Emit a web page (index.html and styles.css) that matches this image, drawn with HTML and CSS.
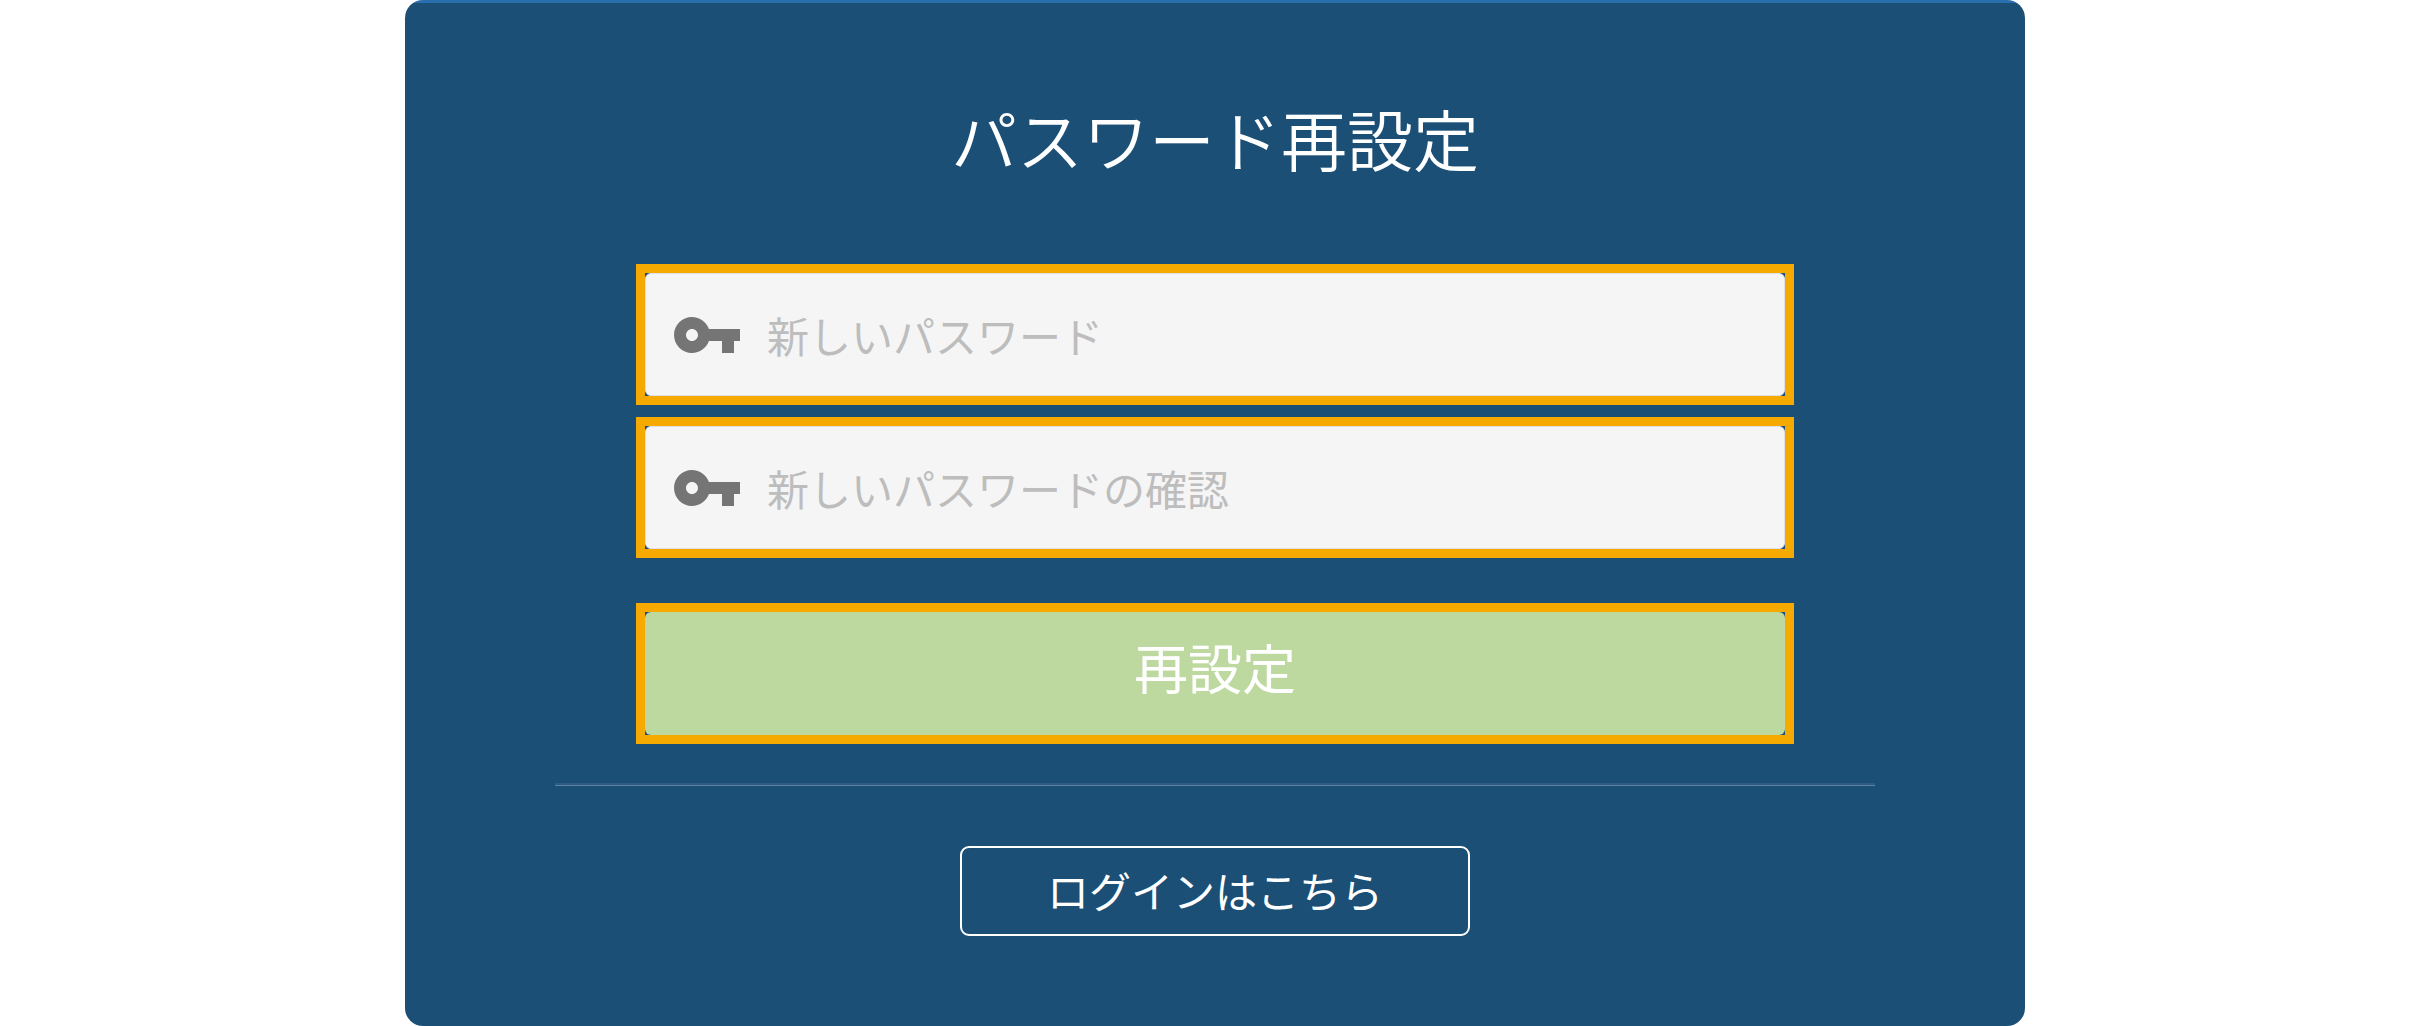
FILE: index.html
```html
<!DOCTYPE html>
<html lang="ja">
<head>
<meta charset="utf-8">
<meta name="viewport" content="width=device-width, initial-scale=1">
<title>パスワード再設定</title>
<link rel="stylesheet" href="styles.css">
</head>
<body>
<main class="card">
  <h1 class="title">パスワード再設定</h1>
  <form class="form">
    <div class="highlight">
      <label class="field">
        <svg class="icon" viewBox="0 0 24 24" aria-hidden="true"><path d="M12.65 10C11.83 7.67 9.61 6 7 6c-3.31 0-6 2.69-6 6s2.69 6 6 6c2.61 0 4.83-1.67 5.65-4H17v4h4v-4h2v-4H12.65zM7 14c-1.1 0-2-.9-2-2s.9-2 2-2 2 .9 2 2-.9 2-2 2z"/></svg>
        <input class="input" type="password" placeholder="新しいパスワード" aria-label="新しいパスワード" autocomplete="new-password">
      </label>
    </div>
    <div class="highlight">
      <label class="field">
        <svg class="icon" viewBox="0 0 24 24" aria-hidden="true"><path d="M12.65 10C11.83 7.67 9.61 6 7 6c-3.31 0-6 2.69-6 6s2.69 6 6 6c2.61 0 4.83-1.67 5.65-4H17v4h4v-4h2v-4H12.65zM7 14c-1.1 0-2-.9-2-2s.9-2 2-2 2 .9 2 2-.9 2-2 2z"/></svg>
        <input class="input" type="password" placeholder="新しいパスワードの確認" aria-label="新しいパスワードの確認" autocomplete="new-password">
      </label>
    </div>
    <div class="highlight highlight-submit">
      <button class="submit" type="submit">再設定</button>
    </div>
  </form>
  <hr class="divider">
  <a class="login" href="#">ログインはこちら</a>
</main>
</body>
</html>
```
FILE: styles.css
```css
* {
  box-sizing: border-box;
}

body {
  margin: 0;
  background: #fff;
  color: #fff;
  font-family: "Noto Sans CJK JP", sans-serif;
}

.card {
  display: flex;
  flex-direction: column;
  align-items: center;
  width: 100%;
  max-width: 1620px;
  margin: 0 auto;
  padding: 90px 150px;
  border-radius: 18px;
  background: linear-gradient(#2a6fad 3px, #1b4f76 3px);
}

.title {
  margin: 0 0 80px;
  font-size: 66px;
  font-weight: 350;
  line-height: 94px;
}

.form {
  display: flex;
  flex-direction: column;
  gap: 12px;
  width: 100%;
  max-width: 1158px;
}

.highlight {
  border: 9px solid #f6aa00;
}

.highlight-submit {
  margin-top: 33px;
}

.field {
  display: flex;
  align-items: center;
  gap: 24px;
  height: 123px;
  padding: 0 25px;
  border: 1px solid #e0e0e4;
  border-radius: 6px;
  background: #f5f5f5;
}

.icon {
  flex: none;
  width: 72px;
  height: 72px;
  fill: #757575;
}

.input {
  flex: 1;
  min-width: 0;
  height: 100%;
  padding: 0;
  border: 0;
  outline: 0;
  background: transparent;
  color: #424242;
  font: inherit;
  font-size: 42px;
}

.input::placeholder {
  color: #bdbdbd;
  opacity: 1;
}

.submit {
  display: block;
  width: 100%;
  height: 123px;
  padding: 0 0 14px;
  border: 0;
  border-radius: 6px;
  background: #bdd99f;
  color: #fff;
  font: inherit;
  font-size: 54px;
}

.divider {
  width: 100%;
  height: 3px;
  margin: 39px 0 60px;
  border: 0;
  background: linear-gradient(#2f5b82 2px, #5c82a3 2px);
}

.login {
  width: 100%;
  max-width: 510px;
  padding-bottom: 2px;
  border: 2px solid #fff;
  border-radius: 9px;
  color: #fff;
  font-size: 42px;
  line-height: 84px;
  text-align: center;
  text-decoration: none;
}
```
